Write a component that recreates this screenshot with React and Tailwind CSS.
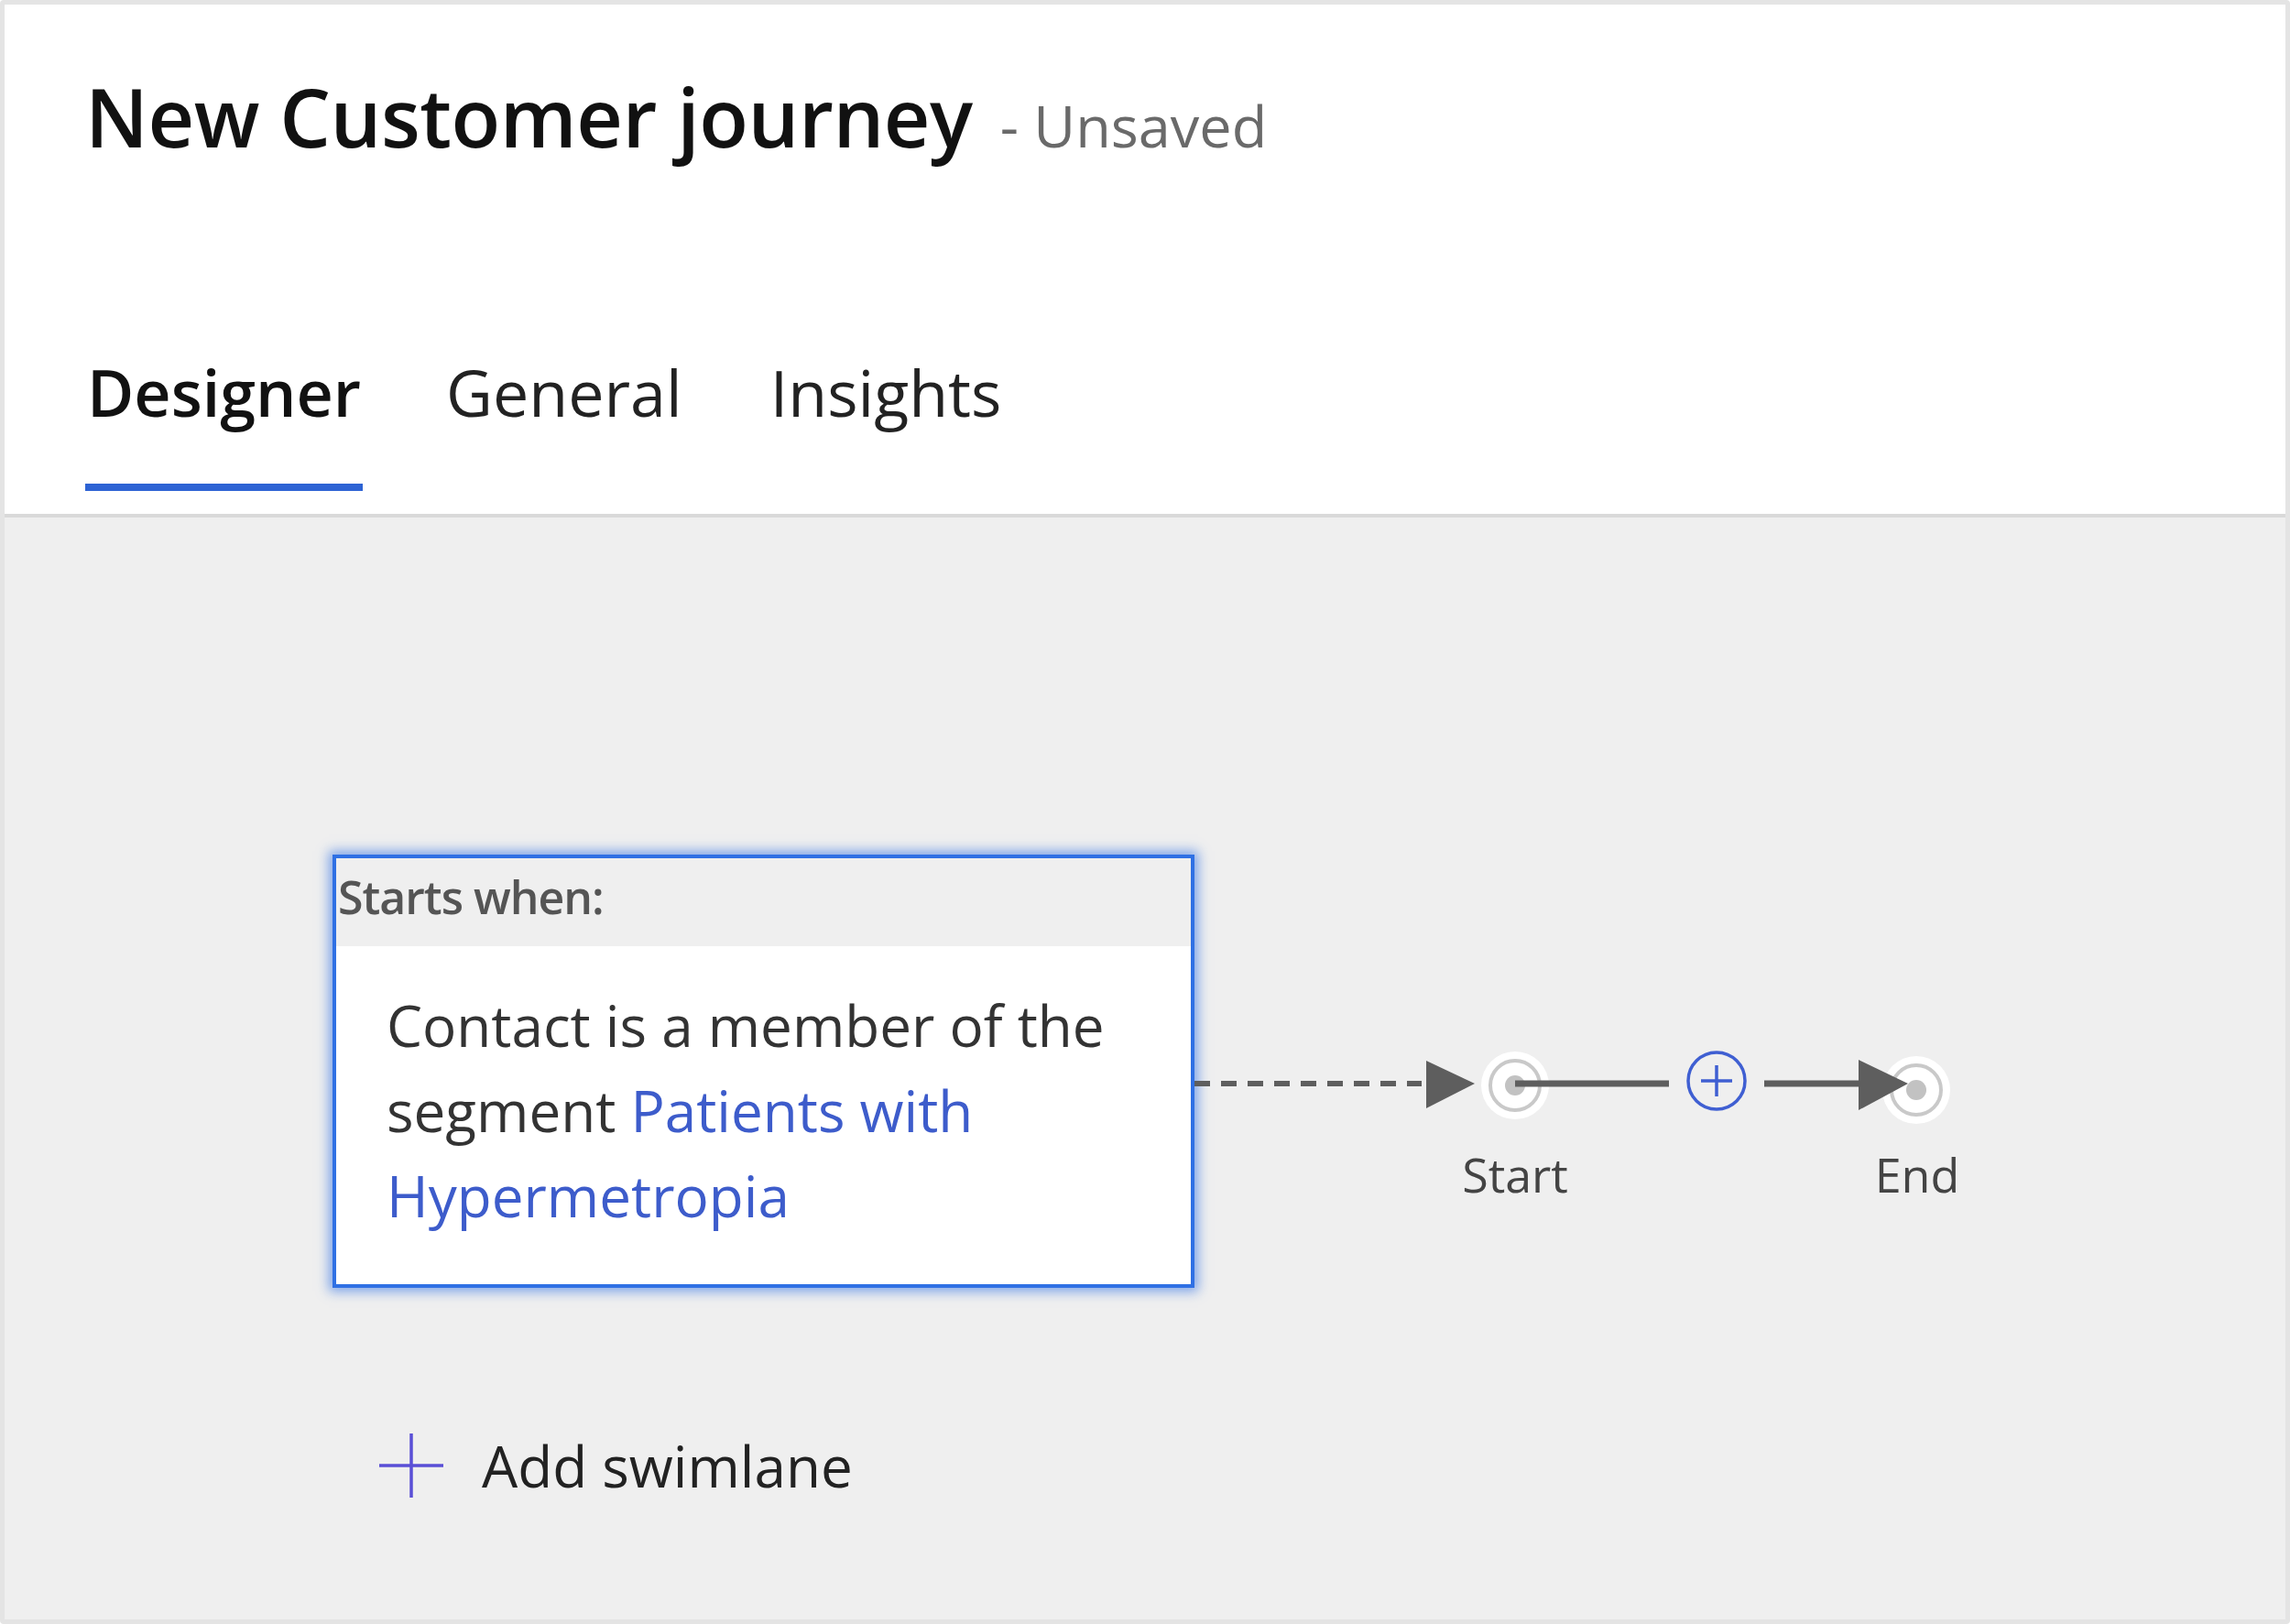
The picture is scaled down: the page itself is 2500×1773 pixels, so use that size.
import React from "react";

const font = { fontFamily: '"Open Sans", "Noto Sans", sans-serif' };

function Flow() {
  return (
    <div className="relative w-[860px] h-[200px] mt-[197px]">
      <svg width="860" height="200" viewBox="0 0 860 200" className="absolute left-0 top-0">
        {/* dashed connector */}
        <line x1="0" y1="53" x2="248" y2="53" stroke="#5e5e5e" strokeWidth="6" strokeDasharray="17 12" />
        <polygon points="253,28 306,53 253,80" fill="#5e5e5e" />
        {/* start node */}
        <circle cx="350" cy="55" r="37" fill="#ffffff" />
        <circle cx="350" cy="55" r="27" fill="#ffffff" stroke="#c9c9c9" strokeWidth="4" />
        <circle cx="350" cy="55" r="11" fill="#c2c2c2" />
        <line x1="350" y1="53" x2="518" y2="53" stroke="#5e5e5e" strokeWidth="7" />
        {/* plus */}
        <circle cx="570" cy="50" r="31" fill="none" stroke="#3f5fd2" strokeWidth="3.5" />
        <line x1="553" y1="50" x2="587" y2="50" stroke="#3f5fd2" strokeWidth="3.5" />
        <line x1="570" y1="33" x2="570" y2="67" stroke="#3f5fd2" strokeWidth="3.5" />
        <line x1="622" y1="53" x2="728" y2="53" stroke="#5e5e5e" strokeWidth="7" />
        {/* end node */}
        <circle cx="788" cy="60" r="37" fill="#ffffff" />
        <circle cx="788" cy="60" r="27" fill="#ffffff" stroke="#c9c9c9" strokeWidth="4" />
        <circle cx="788" cy="60" r="11" fill="#c2c2c2" />
        <polygon points="725,27 779,53 725,82" fill="#5e5e5e" />
      </svg>
      <div className="absolute left-[290px] top-[122px] w-[120px] text-center text-[52px] leading-[60px] text-[#444]">Start</div>
      <div className="absolute left-[729px] top-[122px] w-[120px] text-center text-[52px] leading-[60px] text-[#444]">End</div>
    </div>
  );
}

export default function App() {
  return (
    <div style={font} className="w-[2500px] h-[1773px] border-[5px] border-[#e4e4e4] rounded-[4px] bg-[#efefef] flex flex-col overflow-hidden">
      <header className="bg-white border-b-[4px] border-[#d9d9d9] h-[560px] pl-[88px] shrink-0">
        <div className="pt-[72px] flex items-baseline leading-[100px]">
          <span className="text-[88px] font-semibold text-[#111] tracking-[-0.5px]">New Customer journey</span>
          <span className="ml-[30px] text-[63px] text-[#6a6a6a]">- Unsaved</span>
        </div>
        <div className="mt-[201px] flex items-start text-[70px] leading-[80px] text-[#222]">
          <div className="flex flex-col">
            <span className="font-semibold text-[#111] px-[2px]">Designer</span>
            <div className="mt-[60px] h-[8px] bg-[#2d63d4]"></div>
          </div>
          <span className="ml-[91px]">General</span>
          <span className="ml-[96px]">Insights</span>
        </div>
      </header>
      <main className="flex-1 relative">
        <div className="flex items-start pl-[358px] pt-[368px]">
          <div className="w-[941px] border-[4px] border-[#2f70e4] bg-white shadow-[0_0_12px_4px_rgba(47,112,228,0.6)]">
            <div className="h-[96px] bg-[#efefef] flex items-center pl-[2px] pb-[12px]">
              <span className="text-[50px] font-semibold text-[#555] tracking-[-1px]">Starts when:</span>
            </div>
            <div className="pl-[55px] pr-[40px] pt-[40px] pb-[50px] text-[62px] leading-[93px] text-[#333]">
              Contact is a member of the
              <br />
              segment <span className="text-[#3d5ccb]">Patients with</span>
              <br />
              <span className="text-[#3d5ccb]">Hypermetropia</span>
            </div>
          </div>
          <Flow />
        </div>
        <div className="mt-[154px] ml-[409px] flex items-center">
          <svg width="70" height="70" viewBox="0 0 70 70">
            <line x1="0" y1="35" x2="70" y2="35" stroke="#5a4fd6" strokeWidth="3.5" />
            <line x1="35" y1="0" x2="35" y2="70" stroke="#5a4fd6" strokeWidth="3.5" />
          </svg>
          <span className="ml-[42px] text-[62px] leading-[80px] text-[#222]">Add swimlane</span>
        </div>
      </main>
    </div>
  );
}
